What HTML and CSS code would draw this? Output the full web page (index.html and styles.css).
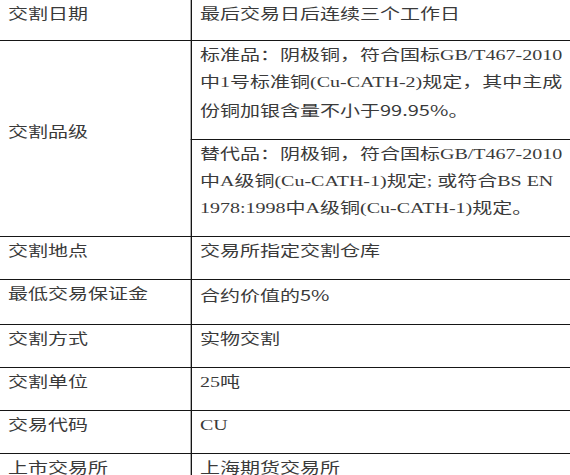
FILE: index.html
```html
<!DOCTYPE html>
<html lang="zh-CN">
<head>
<meta charset="utf-8">
<title>铜期货合约</title>
<link rel="stylesheet" href="styles.css">
</head>
<body>
<div class="sheet">
  <table class="spec">
    <tr class="first">
      <td class="label">交割日期</td>
      <td class="value">最后交易日后连续三个工作日</td>
    </tr>
    <tr>
      <td class="label" rowspan="2">交割品级</td>
      <td class="value">标准品：阴极铜，符合国标GB/T467-2010<br>中1号标准铜(Cu-CATH-2)规定，其中主成<br>份铜加银含量不小于<span class="sans">99.95%</span>。</td>
    </tr>
    <tr>
      <td class="value">替代品：阴极铜，符合国标GB/T467-2010<br>中A级铜(Cu-CATH-1)规定; 或符合BS EN<br>1978:1998中A级铜(Cu-CATH-1)规定。</td>
    </tr>
    <tr>
      <td class="label">交割地点</td>
      <td class="value">交易所指定交割仓库</td>
    </tr>
    <tr>
      <td class="label">最低交易保证金</td>
      <td class="value">合约价值的<span class="sans">5%</span></td>
    </tr>
    <tr>
      <td class="label">交割方式</td>
      <td class="value">实物交割</td>
    </tr>
    <tr>
      <td class="label">交割单位</td>
      <td class="value">25吨</td>
    </tr>
    <tr>
      <td class="label">交易代码</td>
      <td class="value">CU</td>
    </tr>
    <tr>
      <td class="label">上市交易所</td>
      <td class="value">上海期货交易所</td>
    </tr>
  </table>
</div>
</body>
</html>
```
FILE: styles.css
```css
html, body {
  margin: 0;
  padding: 0;
  overflow: hidden;
  background: #ffffff;
}

.sheet {
  width: 427.5px;
  transform: scaleX(1.3333);
  transform-origin: 0 0;
}

.spec {
  width: 427.5px;
  border-collapse: collapse;
  table-layout: fixed;
  font-family: "Liberation Serif", "Noto Sans CJK SC", serif;
  font-size: 15px;
  line-height: 27px;
  color: #3a3a3a;
}

.spec td {
  border: 1px solid #161616;
  padding: 1px 6px 14px 6px;
  vertical-align: top;
  white-space: nowrap;
}

.spec tr.first td {
  border-top: none;
  padding-bottom: 12px;
}

.spec td.label {
  width: 131px;
  border-left: none;
}

.spec td.label[rowspan] {
  vertical-align: middle;
}

.spec td.value {
  border-right: none;
}

.sans {
  font-family: "Noto Sans CJK SC", sans-serif;
}
```
